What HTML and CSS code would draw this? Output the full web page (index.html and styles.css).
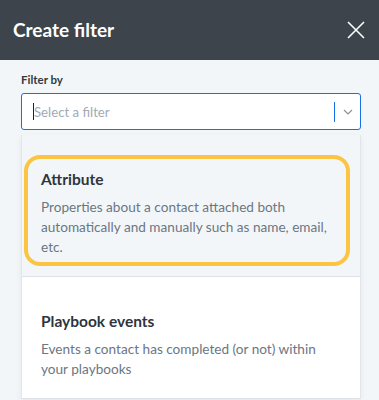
FILE: index.html
```html
<html>
	<head>
		<link rel="stylesheet" href="styles.css">
	</head>
	<body>
		<div class="header">
			<div class="title">Create filter</div>
			<svg class="close" width="18" height="18" viewBox="0 0 18 18">
				<path d="M1 1L17 17M17 1L1 17" stroke="#ffffff" stroke-width="1.6" fill="none" />
			</svg>
		</div>
		<div class="content">
			<div class="label">Filter by</div>
			<div class="select">
				<span class="cursor"></span>
				<span class="placeholder">Select a filter</span>
				<span class="divider"></span>
				<svg class="chevron" width="10" height="6" viewBox="0 0 10 6">
					<path d="M1 1L5 5L9 1" stroke="#8a929c" stroke-width="1.2" fill="none" />
				</svg>
			</div>
			<div class="menu">
				<div class="option active">
					<div class="option-box">
						<div class="option-title">Attribute</div>
						<div class="option-desc">Properties about a contact attached both automatically and manually such as name, email, etc.</div>
					</div>
				</div>
				<div class="option">
					<div class="option-box">
						<div class="option-title">Playbook events</div>
						<div class="option-desc">Events a contact has completed (or not) within your playbooks</div>
					</div>
				</div>
			</div>
		</div>
	</body>
</html>
```
FILE: styles.css
```css
body,
html {
	margin: 0;
	background-color: #f3f6f9;
	font-family: "Lato", "Liberation Sans", sans-serif;
}

.header {
	display: flex;
	align-items: center;
	justify-content: space-between;
	height: 60px;
	padding: 0 13px;
	background-color: #3d444c;
	box-sizing: border-box;
}

.title {
	color: #ffffff;
	font-size: 19px;
	font-weight: bold;
	margin-top: -1px;
}

.close {
	margin-right: 1px;
}

.content {
	padding: 12px 18px 0 21px;
}

.label {
	font-size: 11.5px;
	font-weight: bold;
	color: #343a42;
	line-height: 16px;
	margin-bottom: 5px;
}

.select {
	display: flex;
	align-items: center;
	height: 37px;
	border: 1px solid #1a6ee6;
	border-radius: 3px;
	background-color: #ffffff;
	padding: 0 7px 0 11px;
	box-sizing: border-box;
}

.cursor {
	width: 1px;
	height: 17px;
	background-color: #222;
}

.placeholder {
	flex: 1;
	font-size: 13.2px;
	color: #a2aab4;
}

.divider {
	width: 1px;
	height: 20px;
	background-color: #1a6ee6;
	margin-right: 8px;
}

.menu {
	margin-top: 5px;
	border-left: 1px solid #e2e6eb;
	border-right: 1px solid #e2e6eb;
	box-shadow: 0 2px 6px rgba(0, 0, 0, 0.06);
}

.option {
	padding: 20px 10px 10px 2px;
	background-color: #ffffff;
	border-bottom: 1px solid #dde2e8;
}

.option.active {
	background-color: #f3f6f9;
}

.option-box {
	border: 4px solid transparent;
	border-radius: 16px;
	padding: 10px 10px 5px 13px;
}

.option.active .option-box {
	border-color: #fcc443;
}

.option-title {
	font-size: 15.5px;
	font-weight: bold;
	color: #2f353c;
	line-height: 20px;
	margin-bottom: 8px;
}

.option-desc {
	font-size: 13.6px;
	color: #6b7684;
	line-height: 20px;
}
```
